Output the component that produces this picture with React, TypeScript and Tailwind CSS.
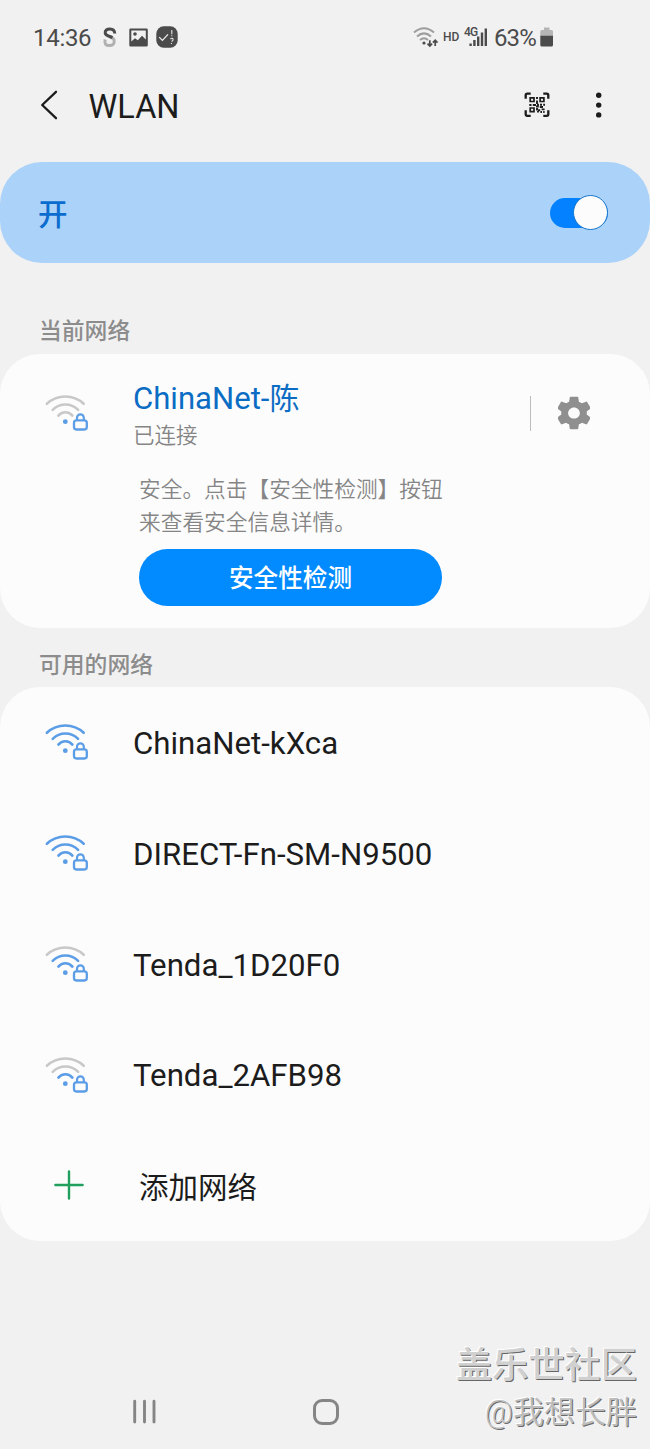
import clsx from "clsx";

interface Network {
    name: string;
    level: number;
}

const networks: Network[] = [
    { name: "ChinaNet-kXca", level: 3 },
    { name: "DIRECT-Fn-SM-N9500", level: 3 },
    { name: "Tenda_1D20F0", level: 2 },
    { name: "Tenda_2AFB98", level: 1 },
];

// Arcs from the inside out, lit up to the signal level
const arcs = ["M14.4 22.6 A9 9 0 0 1 28.4 22.6", "M8.7 16.8 A18 18 0 0 1 34.1 16.8", "M2.9 10.8 A27 27 0 0 1 39.7 10.8"];

function WifiLockIcon({ level }: { level: number }) {
    return (
        <svg width="46" height="40" viewBox="0 0 46 40" fill="none" className="shrink-0">
            {arcs.map((d, index) => (
                <path
                    key={d}
                    d={d}
                    strokeWidth="2.6"
                    strokeLinecap="round"
                    className={clsx(index < level ? "stroke-[#5b9de6]" : "stroke-[#c8c8c8]")}
                />
            ))}
            <circle cx="21.3" cy="28.7" r="2.4" className="fill-[#5b9de6]" />
            <rect x="30" y="27.3" width="12.8" height="9.2" rx="2.4" className="stroke-[#5b9de6]" strokeWidth="2.3" />
            <path d="M33 27.2 V24.8 A3.4 3.4 0 0 1 39.8 24.8 V27.2" className="stroke-[#5b9de6]" strokeWidth="2.2" />
        </svg>
    );
}

function QrIcon() {
    return (
        <svg width="26" height="26" viewBox="0 0 26 26" fill="none" stroke="#1c1c1c">
            <path
                d="M1.7 6.7 V3.2 Q1.7 1.7 3.2 1.7 H6.7 M19.3 1.7 H22.8 Q24.3 1.7 24.3 3.2 V6.7 M24.3 18.3 V22.3 Q24.3 23.8 22.8 23.8 H19.3 M6.7 23.8 H3.2 Q1.7 23.8 1.7 22.3 V18.3"
                strokeWidth="2.3"
            />
            <path d="M6.2 5.8 H10 V9.5 H6.2 Z M16.1 5.8 H19.9 V9.5 H16.1 Z M6.2 16 H10 V19.7 H6.2 Z" strokeWidth="1.7" />
            <path
                d="M13 5 V7 M13 8.5 V12 M5.3 13 H7.5 M8.8 13 H12 M14 11.8 V14 M12 14.5 H14.8 M16 12.8 H18 M19.2 12.8 H21 M15.8 15 H19 M13 16 V18.6 M14 18.2 H16.2 M17.6 17.4 H20.6 M16.4 20 H18 M19.2 20 H20.6 M14 20.4 V19"
                strokeWidth="1.9"
            />
        </svg>
    );
}

function StatusBar() {
    return (
        <div className="flex h-[74px] items-center pl-[33px] text-[#4b4b4b]">
            <span className="mt-[2px] w-[58px] text-[24px] tracking-[-0.3px]">14:36</span>
            <svg width="16" height="22" viewBox="0 0 16 22" fill="none" strokeWidth="3" className="ml-[11px]">
                <path d="M3.2 13.5 C2 18 4 19.5 7.3 19.5 C10.5 19.5 12.7 18 12.2 14.5 C12 12.5 10 11.7 8 11" stroke="#b0b0b0" />
                <path d="M12.8 7.5 C12.6 4 10.5 2.9 8 2.9 C5 2.9 2.8 4.5 3.2 7 C3.6 9.8 7 10 10.5 11.6" stroke="#4b4b4b" />
            </svg>
            <svg width="19" height="19" viewBox="0 0 19 19" className="ml-[11px]">
                <path
                    fillRule="evenodd"
                    fill="#4b4b4b"
                    d="M1.5 0.5 H17.5 Q18.8 0.5 18.8 1.8 V17.2 Q18.8 18.5 17.5 18.5 H1.5 Q0.3 18.5 0.3 17.2 V1.8 Q0.3 0.5 1.5 0.5 Z M2.3 2.5 V13.5 L6 10.2 L8.8 12.2 L13 7.8 L16.8 11.5 V2.5 Z"
                />
                <circle cx="6" cy="6" r="1.8" fill="#4b4b4b" />
            </svg>
            <svg width="22" height="22" viewBox="0 0 22 22" fill="none" className="ml-[8px]">
                <rect x="0.3" y="0.3" width="21.4" height="21.4" rx="7.5" fill="#4b4b4b" />
                <path d="M3.2 11.2 L6.4 14.4 L12 8.4" stroke="#f1f1f1" strokeWidth="1.2" />
                <path d="M15.8 4 V8.2 M15.8 9.3 V10.3 M14.3 12.8 Q17.6 11.6 17 14 Q16.5 15 15.6 15.6 M15.5 17 V18" stroke="#e5e5e5" strokeWidth="1.1" />
            </svg>
            <svg width="26" height="22" viewBox="0 0 26 22" fill="none" className="ml-[235px]">
                <path d="M1 6.6 Q11 -2 21 6.6 M4 10.5 Q11 4.2 18 10.5 M7 14 Q11 10.4 15 14" stroke="#9d9d9d" strokeWidth="2" />
                <circle cx="11" cy="17" r="1.6" fill="#4b4b4b" />
                <path d="M16.8 14.2 V20 M14.5 17.6 L16.8 20 L19.1 17.6 M22.2 20 V14.2 M19.9 16.6 L22.2 14.2 L24.5 16.6" stroke="#4b4b4b" strokeWidth="1.7" />
            </svg>
            <span className="ml-[4px] w-[17px] text-[12px] font-medium">HD</span>
            {/* Network type sits on top of the signal bars */}
            <div className="relative ml-[4px] h-[20px] w-[24px]">
                <svg width="24" height="20" viewBox="0 0 24 20" stroke="#4b4b4b" strokeWidth="2.4">
                    <path d="M6.6 19 V16.5 M10.4 19 V13 M14.2 19 V9.5 M18 19 V5.5 M21.8 19 V1.5" />
                </svg>
                <span className="absolute top-0 left-0 text-[12px] leading-[11px] font-medium tracking-[-0.8px]">4G</span>
            </div>
            <span className="mt-[2px] ml-[6px] w-[44px] text-[24px] tracking-[-0.9px]">63%</span>
            <svg width="14" height="20" viewBox="0 0 14 20" className="ml-[2px]">
                <path d="M4 0.5 H9.5 V3 H11.5 Q13 3 13 4.5 V9.5 H0.3 V4.5 Q0.3 3 1.8 3 H4 Z" fill="#b5b5b5" />
                <path d="M0.3 8.7 H13 V18 Q13 19.5 11.5 19.5 H1.8 Q0.3 19.5 0.3 18 Z" fill="#4b4b4b" />
            </svg>
        </div>
    );
}

function Header() {
    return (
        <header className="flex h-[88px] items-start pl-[39px] pr-[47px]">
            <svg width="20" height="30" viewBox="0 0 20 30" fill="none" className="mt-[16px]">
                <path d="M17 1.8 L3.2 15 L17 28.2" stroke="#1c1c1c" strokeWidth="2.3" strokeLinecap="round" strokeLinejoin="round" />
            </svg>
            <h1 className="ml-[29.5px] mt-[14px] text-[32.5px] leading-[38px]">WLAN</h1>
            <div className="ml-auto mt-[18px] flex items-center">
                <QrIcon />
                <svg width="8" height="26" viewBox="0 0 8 26" fill="#1c1c1c" className="ml-[45px]">
                    <circle cx="3.7" cy="3.3" r="2.7" />
                    <circle cx="3.7" cy="13.1" r="2.7" />
                    <circle cx="3.7" cy="22.9" r="2.7" />
                </svg>
            </div>
        </header>
    );
}

function CurrentNetwork() {
    return (
        <section className="h-[274px] rounded-[40px] bg-[#fcfcfc] pl-[44px]">
            <div className="flex pt-[25px]">
                <div className="pt-[14px]">
                    <WifiLockIcon level={0} />
                </div>
                <div className="ml-[43px]">
                    <p className="text-[31.1px] leading-[40px] text-[#0b6cc4]">
                        ChinaNet-<span className="text-[30px]">陈</span>
                    </p>
                    <p className="mt-[2px] text-[21.5px] leading-[30px] font-[350] text-[#858585]">已连接</p>
                </div>
                <div className="ml-auto mr-[60px] mt-[16px] flex h-[36px] items-center">
                    <div className="h-[35px] w-[1.5px] bg-[#bdbdbd]" />
                    <svg width="32" height="34" viewBox="3 2 18 20" preserveAspectRatio="none" fill="#8f8f8f" className="ml-[27px]">
                        <path d="M19.14 12.94c.04-.3.06-.61.06-.94 0-.32-.02-.64-.07-.94l2.03-1.58c.18-.14.23-.41.12-.61l-1.92-3.32c-.12-.22-.37-.29-.59-.22l-2.39.96c-.5-.38-1.03-.7-1.62-.94l-.36-2.54c-.04-.24-.24-.41-.48-.41h-3.84c-.24 0-.43.17-.47.41l-.36 2.54c-.59.24-1.13.57-1.62.94l-2.39-.96c-.22-.08-.47 0-.59.22L2.74 8.87c-.12.21-.08.47.12.61l2.03 1.58c-.05.3-.09.63-.09.94s.02.64.07.94l-2.03 1.58c-.18.14-.23.41-.12.61l1.92 3.32c.12.22.37.29.59.22l2.39-.96c.5.38 1.03.7 1.62.94l.36 2.54c.05.24.24.41.48.41h3.84c.24 0 .44-.17.47-.41l.36-2.54c.59-.24 1.13-.56 1.62-.94l2.39.96c.22.08.47 0 .59-.22l1.92-3.32c.12-.22.07-.47-.12-.61l-2.01-1.58zM12 15.3c-1.82 0-3.3-1.48-3.3-3.3s1.48-3.3 3.3-3.3 3.3 1.48 3.3 3.3-1.48 3.3-3.3 3.3z" />
                    </svg>
                </div>
            </div>
            <div className="ml-[95px] mt-[22px] w-[304px]">
                <p className="whitespace-nowrap text-[21.7px] leading-[33px] font-[350] text-[#858585]">
                    安全。点击【安全性检测】按钮
                    <br />
                    来查看安全信息详情。
                </p>
                <button className="mt-[10px] h-[57px] w-[303px] rounded-full bg-[#028aff] pt-[3px] text-[24.6px] font-medium text-white">
                    安全性检测
                </button>
            </div>
        </section>
    );
}

function NetworkList() {
    return (
        <section className="flex h-[554px] flex-col rounded-[40px] bg-[#fcfcfc] pl-[44px]">
            {networks.map((network) => (
                <div key={network.name} className="flex flex-1 items-center">
                    <WifiLockIcon level={network.level} />
                    <span className="ml-[43px] mt-[4px] text-[31.2px]">{network.name}</span>
                </div>
            ))}
            <div className="flex flex-1 items-center">
                <svg width="30" height="30" viewBox="0 0 30 30" className="mb-[2px] ml-[10px]">
                    <path d="M1.4 15 H28.6 M15 1.4 V28.6" stroke="#20a05c" strokeWidth="2.4" strokeLinecap="round" />
                </svg>
                <span className="ml-[55px] mt-[5px] text-[29.5px]">添加网络</span>
            </div>
        </section>
    );
}

function NavBar() {
    return (
        <nav className="mt-[134px] flex h-[74px] items-center">
            <svg width="24" height="26" viewBox="0 0 24 26" className="ml-[133px]">
                <path d="M1.7 2.3 V23 M11.5 2.3 V23 M21 2.3 V23" stroke="#858585" strokeWidth="2.9" strokeLinecap="round" />
            </svg>
            <div className="ml-[156px] size-[26px] rounded-[9px] border-3 border-[#858585]" />
        </nav>
    );
}

const App = () => {
    return (
        <main className="relative h-[1449px] w-[650px] overflow-hidden bg-[#f1f1f1] font-[Roboto,'Noto_Sans_CJK_SC',sans-serif] text-[#1c1c1c]" lang="zh-CN">
            <StatusBar />
            <Header />

            <div className="flex h-[101px] items-center justify-between rounded-[42px] bg-[#abd2f9] pl-[38px] pr-[42px]">
                <span className="mt-[5px] text-[29.5px] font-medium text-[#0b6cd0]">开</span>
                <div className="flex h-[30px] w-[58px] items-center justify-end rounded-full bg-[#0381fe]">
                    <div className="size-[35px] shrink-0 rounded-full border-[1.5px] border-[#1476cc] bg-[#fcfcfc]" />
                </div>
            </div>

            <h2 className="flex h-[91px] items-end pb-[6px] pl-[39px] text-[22.8px] font-medium leading-[33px] text-[#8c8c8c]">
                当前网络
            </h2>
            <CurrentNetwork />

            <h2 className="flex h-[59px] items-end pb-[5px] pl-[39px] text-[22.8px] font-medium leading-[33px] text-[#8c8c8c]">
                可用的网络
            </h2>
            <NetworkList />

            <NavBar />

            {/* Community watermark */}
            <div className="absolute right-[13px] bottom-[13px] flex flex-col items-end whitespace-nowrap">
                <span className="text-[36.2px] font-medium leading-[48px] text-[#d0d0d0] [text-shadow:-1px_-1px_0_#fff,1px_1px_0_#666]">
                    盖乐世社区
                </span>
                <span className="text-[31px] font-[350] leading-[46px] text-[#bdbdbd] [text-shadow:-1px_-1px_0_#fff,1px_1px_0_#6b6b6b]">
                    @我想长胖
                </span>
            </div>
        </main>
    );
};

export default App;
